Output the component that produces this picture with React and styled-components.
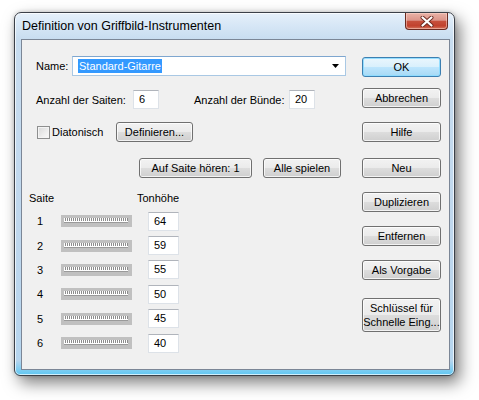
import React from 'react';
import styled, { createGlobalStyle } from 'styled-components';

const Global = createGlobalStyle`
  html, body { margin: 0; padding: 0; background: #fff; }
  body { font-family: "Liberation Sans", Arial, sans-serif; font-size: 11px; color: #000; }
`;

const Page = styled.div`
  width: 479px;
  height: 400px;
  padding: 12px 0 0 14px;
  box-sizing: border-box;
  overflow: hidden;
`;

const Window = styled.div`
  width: 441px;
  height: 364px;
  box-sizing: border-box;
  border: 1px solid #3b4048;
  border-radius: 7px 7px 6px 6px;
  background: linear-gradient(180deg, #e6f0fa 0px, #d7e7f6 12px, #c8ddf0 26px, #bfd7ed 60%, #b6d5ee 96%, #5fc7f2 100%);
  box-shadow: 5px 7px 16px rgba(0, 0, 0, 0.5), 0 0 4px rgba(0, 0, 0, 0.2), inset 0 0 0 1px rgba(255, 255, 255, 0.7);
  padding: 0 4px 5px 6px;
  display: flex;
  flex-direction: column;
`;

const TitleBar = styled.div`
  height: 26px;
  display: flex;
  align-items: flex-start;
  justify-content: space-between;
  padding-left: 1px;
  padding-right: 2px;
`;

const TitleText = styled.div`
  line-height: 26px;
  font-size: 12.5px;
  color: #000;
`;

const CloseButton = styled.div`
  width: 43px;
  height: 17px;
  box-sizing: border-box;
  border: 1px solid #6a2a20;
  border-top: none;
  border-radius: 0 0 4px 4px;
  background: linear-gradient(180deg, #eab3a7 0%, #dc958a 45%, #c6503c 52%, #c1412d 80%, #d4765e 100%);
  box-shadow: inset 0 0 0 1px rgba(255, 220, 210, 0.5);
  display: flex;
  align-items: center;
  justify-content: center;
`;

const Client = styled.div`
  flex: 1;
  border: 1px solid #7b8696;
  background: #f0f0f0;
  display: flex;
  padding: 16px 8px 0 0;
`;

const LeftPanel = styled.div`
  width: 324px;
  display: flex;
  flex-direction: column;
`;

const Row = styled.div`
  display: flex;
  align-items: center;
  height: ${p => p.h || 20}px;
  margin-top: ${p => p.mt || 0}px;
  padding-left: ${p => p.pl || 0}px;
`;

const Label = styled.span`
  width: ${p => (p.w ? `${p.w}px` : 'auto')};
  flex: none;
  white-space: nowrap;
  margin-left: ${p => p.ml || 0}px;
`;

const Combo = styled.div`
  width: 274px;
  height: 20px;
  box-sizing: border-box;
  border: 1px solid #a9c8e4;
  border-top-color: #7ea6cf;
  background: #fff;
  display: flex;
  align-items: center;
  justify-content: space-between;
  padding: 0 5px 0 5px;
`;

const Selected = styled.span`
  background: #3399ff;
  color: #fff;
  line-height: 14px;
  padding: 0 1px;
`;

const TextBox = styled.div`
  width: ${p => p.w || 26}px;
  height: 19px;
  box-sizing: border-box;
  border: 1px solid #dde2e8;
  border-top-color: #b0b4bb;
  background: #fff;
  padding-left: ${p => p.pl || 5}px;
  line-height: 17px;
  flex: none;
`;

const CheckBox = styled.div`
  width: 13px;
  height: 13px;
  box-sizing: border-box;
  border: 1px solid #8e8f8f;
  background: linear-gradient(135deg, #d8d8d8 0%, #eeeeee 60%, #fafafa 100%);
  box-shadow: inset 0 0 0 1px #f4f4f4;
  margin-left: 1px;
  margin-right: 2px;
  flex: none;
`;

const Button = styled.div`
  width: ${p => p.w || 79}px;
  height: ${p => p.h || 20}px;
  margin-top: ${p => p.mt || 0}px;
  margin-left: ${p => p.ml || 0}px;
  box-sizing: border-box;
  flex: none;
  border: 1px solid ${p => (p.primary ? '#3c7fb1' : '#707070')};
  border-radius: 3px;
  background: ${p =>
    p.primary
      ? 'linear-gradient(180deg, #eaf6fd 0%, #d9f0fc 49%, #bee6fd 50%, #a7d9f5 100%)'
      : 'linear-gradient(180deg, #f2f2f2 0%, #ebebeb 49%, #dddddd 50%, #cfcfcf 100%)'};
  box-shadow: inset 0 0 0 1px ${p => (p.primary ? 'rgba(140, 220, 255, 0.9)' : 'rgba(255, 255, 255, 0.75)')};
  display: flex;
  align-items: center;
  justify-content: center;
  text-align: center;
  line-height: 14px;
  white-space: nowrap;
`;

const Header = styled.div`
  display: flex;
  margin-top: 13px;
  padding-left: 7px;
  line-height: 14px;
`;

const Table = styled.div`
  display: grid;
  grid-template-columns: 32px 87px 31px;
  grid-auto-rows: 24.4px;
  align-items: center;
  margin-top: 4px;
  padding-left: 7px;
`;

const Num = styled.div`
  padding-left: 8px;
`;

const Slider = styled.div`
  width: 71px;
  height: 12px;
  box-sizing: border-box;
  background: #c0c0c0;
  padding: 3px 4px 0 3px;
`;

const Track = styled.div`
  height: 5px;
  background:
    repeating-linear-gradient(90deg, #ffffff 0 1px, #8c8c8c 1px 2px) top / 100% 3px no-repeat,
    #ffffff;
  border-bottom: 1px solid #9a9a9a;
  box-sizing: border-box;
`;

const RightPanel = styled.div`
  width: 79px;
  margin-left: 16px;
  padding-top: 1px;
  display: flex;
  flex-direction: column;
`;

const CloseGlyph = () => (
  <svg width="14" height="11" viewBox="0 0 14 11">
    <path d="M2.5 1.5 L11.5 9.5 M11.5 1.5 L2.5 9.5" stroke="#6b2a20" strokeWidth="4" strokeLinecap="round" />
    <path d="M2.5 1.5 L11.5 9.5 M11.5 1.5 L2.5 9.5" stroke="#ffffff" strokeWidth="2.2" strokeLinecap="round" />
  </svg>
);

const Arrow = () => (
  <svg width="8" height="4" viewBox="0 0 8 4">
    <path d="M0 0 H7 L3.5 4 Z" fill="#000" />
  </svg>
);

const strings = [
  ['1', '64'],
  ['2', '59'],
  ['3', '55'],
  ['4', '50'],
  ['5', '45'],
  ['6', '40'],
];

export default function App() {
  return (
    <>
      <Global />
      <Page>
        <Window>
          <TitleBar>
            <TitleText>Definition von Griffbild-Instrumenten</TitleText>
            <CloseButton>
              <CloseGlyph />
            </CloseButton>
          </TitleBar>
          <Client>
            <LeftPanel>
              <Row pl={14}>
                <Label w={36}>Name:</Label>
                <Combo>
                  <Selected>Standard-Gitarre</Selected>
                  <Arrow />
                </Combo>
              </Row>
              <Row pl={14} mt={14} h={19}>
                <Label w={97}>Anzahl der Saiten:</Label>
                <TextBox w={26}>6</TextBox>
                <Label w={95} ml={35}>Anzahl der Bünde:</Label>
                <TextBox w={26}>20</TextBox>
              </Row>
              <Row pl={14} mt={13}>
                <CheckBox />
                <Label w={64}>Diatonisch</Label>
                <Button w={77}>Definieren...</Button>
              </Row>
              <Row pl={117} mt={16}>
                <Button w={113}>Auf Saite hören: 1</Button>
                <Button w={78} ml={11}>Alle spielen</Button>
              </Row>
              <Header>
                <Label w={108}>Saite</Label>
                <Label>Tonhöhe</Label>
              </Header>
              <Table>
                {strings.map(([n, v]) => (
                  <React.Fragment key={n}>
                    <Num>{n}</Num>
                    <Slider>
                      <Track />
                    </Slider>
                    <TextBox w={31}>{v}</TextBox>
                  </React.Fragment>
                ))}
              </Table>
            </LeftPanel>
            <RightPanel>
              <Button primary>OK</Button>
              <Button mt={11}>Abbrechen</Button>
              <Button mt={14}>Hilfe</Button>
              <Button mt={16}>Neu</Button>
              <Button mt={14}>Duplizieren</Button>
              <Button mt={14}>Entfernen</Button>
              <Button mt={14}>Als Vorgabe</Button>
              <Button mt={18} h={34}>
                Schlüssel für
                <br />
                Schnelle Eing...
              </Button>
            </RightPanel>
          </Client>
        </Window>
      </Page>
    </>
  );
}
